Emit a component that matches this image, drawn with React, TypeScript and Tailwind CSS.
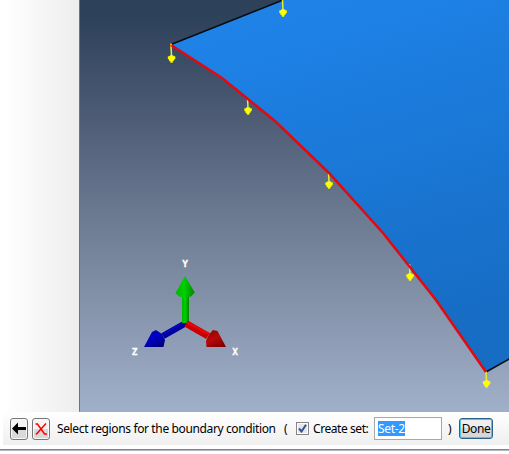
const markers = [
  { x: 282.5, y: 0, tip: 16 },
  { x: 171, y: 46, tip: 62 },
  { x: 247.5, y: 98, tip: 114 },
  { x: 328.5, y: 172, tip: 188 },
  { x: 409.5, y: 264, tip: 280 },
  { x: 486, y: 371, tip: 387 },
];

function Viewport() {
  return (
    <svg className="block h-[411px] w-[429px]" viewBox="80 0 429 411" role="img" aria-label="Model viewport">
      <defs>
        <linearGradient id="sky" x1="0" y1="0" x2="0" y2="411" gradientUnits="userSpaceOnUse">
          <stop offset="0" stopColor="#2d4159" />
          <stop offset=".05" stopColor="#2f425b" />
          <stop offset=".29" stopColor="#4e5c76" />
          <stop offset=".62" stopColor="#77859c" />
          <stop offset="1" stopColor="#a1b0c9" />
        </linearGradient>
        <linearGradient id="surface" x1="290" y1="20" x2="390" y2="350" gradientUnits="userSpaceOnUse">
          <stop offset="0" stopColor="#1e82e7" />
          <stop offset=".5" stopColor="#1a77d5" />
          <stop offset="1" stopColor="#176cc3" />
        </linearGradient>
        <linearGradient id="green" x1="0" x2="1">
          <stop offset="0" stopColor="#00b800" />
          <stop offset=".45" stopColor="#00d000" />
          <stop offset="1" stopColor="#008500" />
        </linearGradient>
        <linearGradient id="red" x1="0" y1="0" x2=".6" y2="1">
          <stop offset="0" stopColor="#8d0000" />
          <stop offset=".55" stopColor="#b80808" />
          <stop offset="1" stopColor="#860000" />
        </linearGradient>
        <linearGradient id="blue" x1="0" y1="0" x2=".7" y2="1">
          <stop offset="0" stopColor="#0000a0" />
          <stop offset=".5" stopColor="#0000c8" />
          <stop offset="1" stopColor="#000080" />
        </linearGradient>
      </defs>
      <rect x="80" width="429" height="411" fill="url(#sky)" />
      <path d="M171 45 284 0H509V359L486 372 436 300 383 233 329 173 275 121 222 78Z" fill="url(#surface)" />
      <path d="M171 44.5 283 0M486 372 510 358.5" stroke="#080d14" strokeWidth="1.5" />
      {markers.map((m) => (
        <g key={m.x}>
          <path d={`M${m.x} ${m.y}L${m.x + 0.5} ${m.tip - 6}`} stroke="#ecec28" strokeWidth="1.5" />
          <path
            d={`M${m.x - 1.5} ${m.tip - 7}h3l1 1h1v2.5h-1v1l-1.5 1.5v1h-2v-1l-1.5-1v-1.5h-1v-2.5h1z`}
            transform="translate(.6 .5)"
            fill="#ff0"
            stroke="#ff0"
            strokeWidth=".4"
          />
        </g>
      ))}
      <path d="M171 45 222 78 275 121 329 173 383 233 436 300 486 372" fill="none" stroke="#e20a10" strokeWidth="2.6" />
      <path d="M170 44.5h2" stroke="#ff9a18" strokeWidth="2" />
      {/* Axis triad */}
      <path d="M186 323 163 336" stroke="#0000a0" strokeWidth="6.5" />
      <path d="M185 321.5 164 333.5" stroke="#0505c4" strokeWidth="2" />
      <path d="M182 297h7v26h-7z" fill="url(#green)" />
      <path d="M186 323.5 208 336" stroke="#c80000" strokeWidth="7" />
      <path d="M187 322.5 209 334" stroke="#e80808" strokeWidth="2.5" />
      <path d="M185 276 194.7 292.5 191 296.5 185 298 179 296.5 175.5 293Z" fill="url(#green)" />
      <path d="M226 347H206.5L206 341 209 334.5 213 330 217.5 331Z" fill="url(#red)" />
      <path d="M144 347H163.5L165 340 162 334 156 330 152 332Z" fill="url(#blue)" />
      {/* Axis letters */}
      <g fill="#fff" stroke="#fff" strokeWidth=".3" fontFamily="DejaVu Sans Mono, monospace" fontSize="9.5" fontWeight="700" textAnchor="middle">
        <text x="185" y="266.5">Y</text>
        <text x="134.5" y="354.5">Z</text>
        <text x="235" y="354.5">X</text>
      </g>
    </svg>
  );
}

const toolButton =
  "flex h-[22px] w-[18px] shrink-0 items-center justify-center rounded-[3px] border border-[#777] bg-linear-to-b from-[#f4f4f4] from-50% to-[#d9d9d9] to-50% p-0 shadow-[inset_0_0_0_1px_#f8f8f8]";

export default function App() {
  return (
    <div className="flex h-[454px] w-[509px] flex-col overflow-hidden bg-white font-['Noto_Sans','Open_Sans',sans-serif] text-[12px] text-black">
      <div className="flex h-[412px]">
        <div className="w-[79px] bg-linear-to-r from-white from-5% to-[#ededed]" />
        <div className="h-[412px] w-[430px] border-b border-l border-b-[#aaa] border-l-[#70747a]">
          <Viewport />
        </div>
      </div>
      <div className="ml-[3px] flex h-[33px] items-center bg-linear-to-b from-white to-[#efefef] pl-[7px]">
        <button className={toolButton} aria-label="Back">
          <svg className="h-[13px] w-[14px] shrink-0" viewBox="0 0 14 13">
            <path d="M0 6.5 6 .5V5H14V8H6V12.5Z" />
          </svg>
        </button>
        <button className={`${toolButton} ml-1`} aria-label="Cancel">
          <svg className="h-[12px] w-[12px] shrink-0" viewBox="0 0 12 12">
            <path d="M.5 1h2l7 10H12M11 .5 1 11.5" fill="none" stroke="#f00" strokeWidth="1.5" />
          </svg>
        </button>
        <span className="ml-[7px] w-[227px] shrink-0 whitespace-nowrap tracking-[-0.37px]">Select regions for the boundary condition</span>
        <span className="w-3 shrink-0">(</span>
        <span className="flex size-[13px] shrink-0 items-center justify-center border border-[#858585] bg-[#e4e8ed] shadow-[inset_0_0_0_1px_white]">
          <svg className="size-[9px]" viewBox="0 0 9 9">
            <path d="M1 4.5 3.5 7.5 8 .8" fill="none" stroke="#354f91" strokeWidth="2" />
          </svg>
        </span>
        <span className="ml-1 w-[61px] shrink-0 whitespace-nowrap tracking-[-0.43px]">Create set:</span>
        <span className="flex h-[23px] w-[68px] shrink-0 items-center border border-[#a5a8ad] bg-white pl-[3px]">
          <span className="h-[15px] w-[27px] whitespace-nowrap bg-[#3399ff] leading-[15px] tracking-[-0.3px] text-white">Set-2</span>
        </span>
        <span className="ml-[6px] w-[11px] shrink-0">)</span>
        <button className="flex h-[21px] w-[34px] shrink-0 items-center justify-center rounded-[3px] border border-[#2c628b] bg-linear-to-b from-[#eeeeee] from-50% to-[#d5d8da] to-50% tracking-[-0.4px] shadow-[inset_0_0_0_1px_#48c8f0]">Done</button>
      </div>
      <div className="mt-[4px] h-[2px] border-t border-[#85858d] bg-[#b5b5bb]" />
    </div>
  );
}
